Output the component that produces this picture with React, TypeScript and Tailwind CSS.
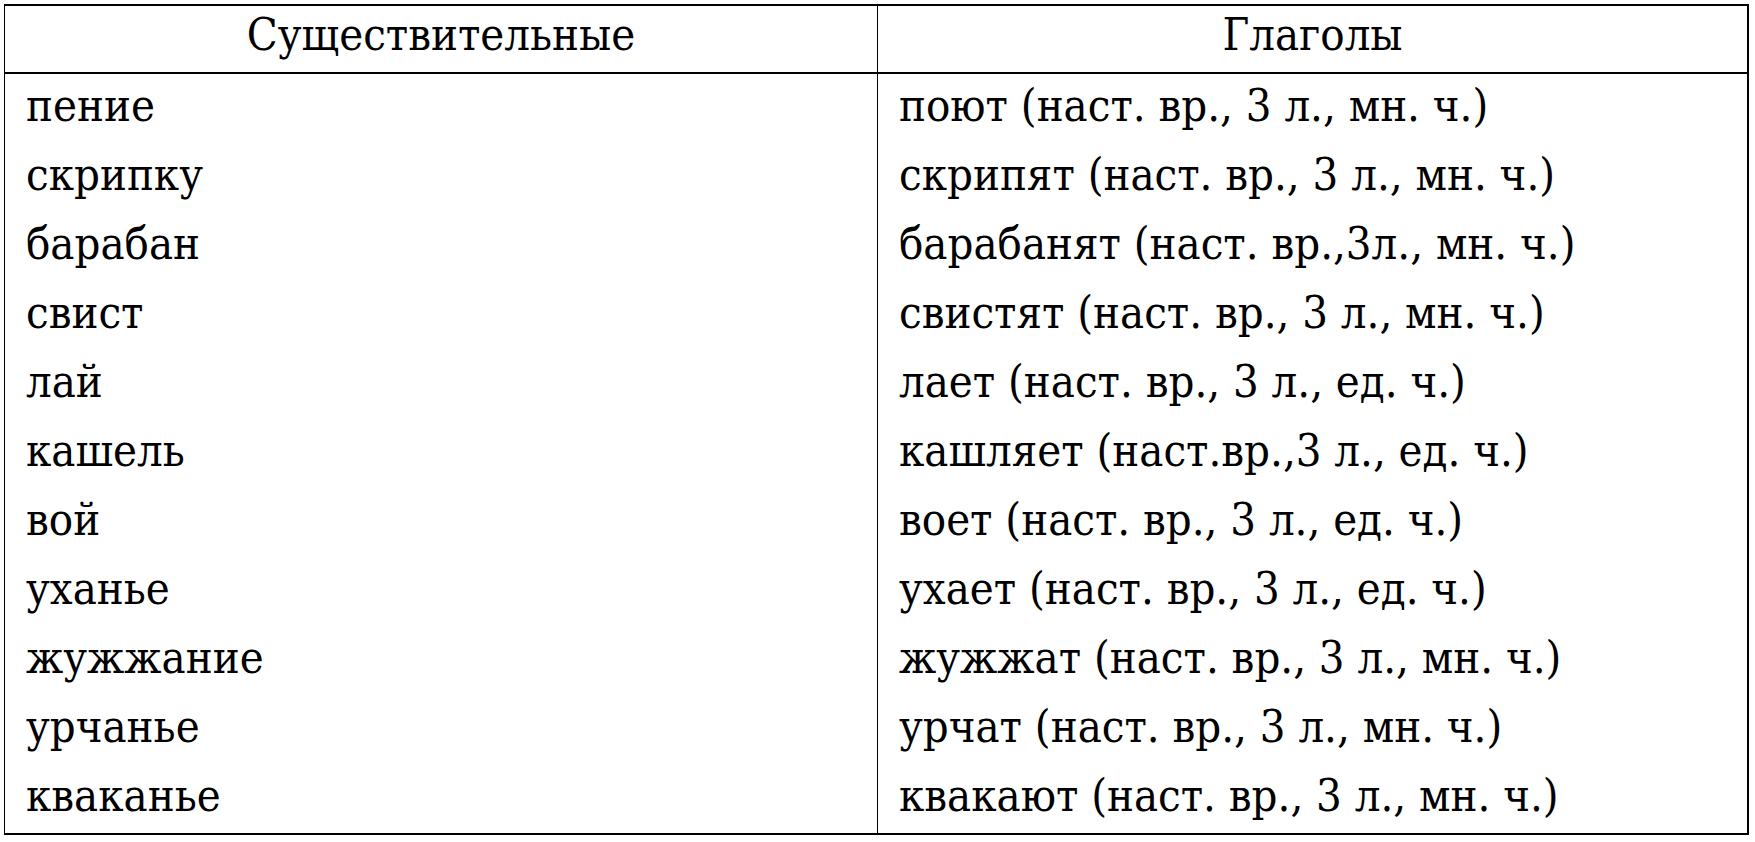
const rows: [string, string][] = [
  ['пение', 'поют (наст. вр., 3 л., мн. ч.)'],
  ['скрипку', 'скрипят (наст. вр., 3 л., мн. ч.)'],
  ['барабан', 'барабанят (наст. вр.,3л., мн. ч.)'],
  ['свист', 'свистят (наст. вр., 3 л., мн. ч.)'],
  ['лай', 'лает (наст. вр., 3 л., ед. ч.)'],
  ['кашель', 'кашляет (наст.вр.,3 л., ед. ч.)'],
  ['вой', 'воет (наст. вр., 3 л., ед. ч.)'],
  ['уханье', 'ухает (наст. вр., 3 л., ед. ч.)'],
  ['жужжание', 'жужжат (наст. вр., 3 л., мн. ч.)'],
  ['урчанье', 'урчат (наст. вр., 3 л., мн. ч.)'],
  ['кваканье', 'квакают (наст. вр., 3 л., мн. ч.)'],
];

export default function App() {
  return (
    <div className="w-[1755px] h-[842px] bg-white pt-[4px] pl-[4px] text-black font-['DejaVu_Serif',serif] font-stretch-condensed text-[45px]">
      <div className="w-[1745px] border-2 border-l border-black">
        {/* header */}
        <div className="grid grid-cols-[872px_1fr] h-[68px] border-b-2 border-black">
          <div className="text-center leading-[57px]">Существительные</div>
          <div className="text-center leading-[57px] border-l border-black">Глаголы</div>
        </div>

        {rows.map(([noun, verb]) => (
          <div key={noun} className="grid grid-cols-[872px_1fr] h-[69px]">
            <div className="pl-[21px] leading-[63px] whitespace-pre">{noun}</div>
            <div className="pl-[21px] leading-[63px] whitespace-pre border-l border-black">{verb}</div>
          </div>
        ))}
      </div>
    </div>
  );
}
